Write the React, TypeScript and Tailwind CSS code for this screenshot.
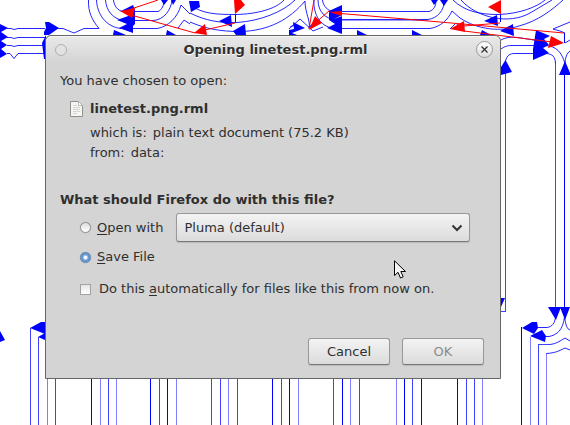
import React from "react";

type Wire = [x: number, opacity: number];

const WIRES: Wire[] = [
  [47, 0.5], [55, 0.75],
  [91, 1], [100, 0.5], [108, 0.75], [116, 0.5],
  [150, 1], [159, 0.75], [167, 1], [176, 0.5],
  [211, 0.75], [220, 0.75], [228, 0.5], [237, 0.75],
  [272, 1], [281, 0.75], [289, 1], [298, 0.5],
  [333, 0.75], [342, 1], [350, 0.5], [359, 0.75],
  [396, 0.5], [404, 1], [412, 0.75], [421, 1],
  [457, 1], [466, 0.75], [474, 0.75], [482, 0.5],
];

function Diagram() {
  return (
    <svg className="absolute top-0 left-0" width="570" height="425" viewBox="0 0 570 425" fill="none" aria-hidden="true">
      <g stroke="#0000ff" strokeOpacity="0.75" shapeRendering="crispEdges">
        {WIRES.map(([x, o]) => (
          <path key={x} d={`M${x + 0.5} 370V425`} strokeOpacity={o} />
        ))}
        <path d="M30.500 328V425M38.500 337V425" />
        <path d="M505.500 68V311.500H500M555.500 62V310" />
        <path d="M564.500 66V310" strokeWidth="1.500" strokeOpacity="1" />
        <path d="M521.500 327V425" strokeOpacity="1" />
        <path d="M530.500 337V425" strokeOpacity="0.500" />
        <path d="M538.500 425V344.500H550" />
        <path d="M546.500 425V353" strokeOpacity="0.500" />
      </g>
      <g stroke="#0000ff" strokeOpacity="0.850">
        <path d="M7 28.500H11L14 29.500L18 28.500H45M7 37.500H11L14 38.500L18 37.500H45M7 45.500H11L14 46.500L18 45.500H44M7 53.500H10L14 58.500L18 53.500H44" />
        <path d="M56 28.500H63L74 33L84 28.500H99C92 20 88 12 88.500 0" />
        <path d="M96.500 0C97 14 106 27 121 28.500H157C168 27 178 17 181 5L190 14" />
        <path d="M105.500 0C106 10 113 20 125 20.500H153C164 20 171 10 172 0" />
        <path d="M113.500 0C114 6 118 11 123 11.500H158C162 10 164 5 164 0" />
        <path d="M178 28L184 20L190 24" />
        <path d="M190 5C203 14 216 14.500 236 14.500C257 14 276 9 284 0" />
        <path d="M190 13C206 21 220 23 237 22.500C260 21 283 12 295 0" />
        <path d="M190 22C206 29 221 31.500 240 31.500C269 31 290 19 305 1C305 13 311 22 309 28L317 20L309 27" />
        <path d="M289 29L300 19L313 31M290 27L294 25M313 31L323 27" />
        <path d="M314 0C313 15 321 28 336 28.500H430C440 27 448 20 452 11L460 18C478 30 501 32 519 26C538 21 552 10 563 0" />
        <path d="M322.500 0C323 6 328 11 333 11.500H429C434 10 436 6 436 0" />
        <path d="M318 0C318 12 326 19 335 19.500H428C438 18 444 10 444 2" />
        <path d="M335 20.500H428" strokeOpacity="0.400" />
        <path d="M453 0C465 12 482 14.500 498 14.500C519 14 537 7 545 0M461 0C477 18 509 25 530 13L552 0" />
        <path d="M450 29L456 23L461 29M570 22L553 29L560 31L565 33M565 43L570 40" />
        <path d="M501 49C505 46 508 45.500 512 45.500H545C556 46 562 52 565 64M501 40C506 37 512 37 518 37.500L540 41M505.500 68V61C507 55 510 53.500 515 53.500H546C553 54 555 57 555.500 63M565 64C565 58 567 53 570 51" />
        <path d="M555.500 317C555 323 552 327 547 327.500H533M564.500 317C563 330 557 335 549 336.500H541M564.500 317C566 326 567 329 570 330M550 344.500C556 344 560 341 565 338L570 341M546.500 353.500C555 353 559 351 565 348L570 350" />
      </g>
      <g fill="#0000ff">
        <path d="M0 24L8 28L1 32L8 37L1 41L7 45L1 49L7 54L0 58Z" />
        <path d="M45 22H49L59 28L49 35H44V32L46 28Z M46 35L42 43L44 59H46Z" />
        <path d="M121 11L133 5L135 10V24L133 26V33L119 28L127 24L117 20L131 15Z" />
        <path d="M114 30L126 35H113Z M167 30L176 35H166Z" />
        <path d="M161 0H168L164 5Z M171 0H176L173 5Z" />
        <path d="M189 1H199L200 7L191 12Z M219 21L231 15L232 27Z M233 31L245 24L246 35H236Z" />
        <path d="M293 22L305 28L292 33L297 35H289V30L294 29Z" />
        <path d="M329 11L342 5V15L334 19L342 16V34L327 28L335 24L329 20Z M357 30L367 35H357Z" />
        <path d="M431 0H438L434 5Z M440 0H448L444 6Z M412 30L422 35H412Z" />
        <path d="M484 21L497 15L498 26Z M500 31L513 24L514 36Z M482 30L491 35H480Z" />
        <path d="M536 30L550 36L544 39L549 45L543 48L549 53L533 60V49L534 43Z" />
        <path d="M505.500 60L512 72L501 75V67Z M565 61L571 75H559Z" />
        <path d="M501 298H505L501 307Z M548 307H561L556 320Z M560 307H570L565 320Z" />
        <path d="M522 328L532 322H537L538 328L534 334Z M530 336L542 330L546 336L545 342Z" />
        <path d="M30 328L41 322H45V334Z M38 337L45 333V340Z M0 331L5 340L0 342Z" />
      </g>
      <g stroke="#ff0000">
        <path d="M131 9L158 0M131 15L195 33M205 30L235 23" />
        <path d="M309 29L314 0M314 24L329 11M335 13L440 22L564 33M464 26L500 23M464 31L552 42" />
      </g>
      <g fill="#ff0000">
        <path d="M120 11L135 8L134 12L132 18Z M234 0H241L245 5L235 14Z M194 33L205 24L207 35Z" />
        <path d="M309 30L315 16L322 23Z M329 12L342 11V16Z" />
        <path d="M488 7L501 0V14Z M450 29L464 21L465 32Z M551 36L564 43L548 48Z" />
      </g>
      <g stroke="#0000ff" shapeRendering="crispEdges">
        <path d="M235.500 14V22M500.500 14V22M564.500 33V43" />
      </g>
    </svg>
  );
}

function FileIcon() {
  return (
    <svg width="14" height="16" viewBox="0 0 14 16" fill="none" aria-hidden="true">
      <path d="M.5.500H8.500L12.500 4.500V15.500H.5Z" fill="#f5f5f3" stroke="#8e908b" />
      <path d="M8.500.500V4.500H12.500Z" fill="#fff" stroke="#b5b7b2" />
      <path d="M3 4.500H7M3 6.500H10M3 8.500H10M3 10.500H10M3 12.500H7" stroke="#d4d4d2" />
    </svg>
  );
}

const radio =
  "size-[11px] shrink-0 appearance-none rounded-full border border-[#8f8f8f] bg-[linear-gradient(#dedede,#ffffff)] shadow-[0_0_1px_#999] checked:border-[#5583b5] checked:bg-[radial-gradient(circle,#ffffff_0px,#ffffff_1px,#6699cf_3px)]";
const button =
  "h-[27px] w-[82px] rounded-[3px] border border-[#999] border-b-[#777] bg-linear-to-b from-[#f3f3f3] to-[#dcdcdc] shadow-[0_1px_1px_#bbb]";

export default function App() {
  return (
    <main className="relative min-h-screen overflow-hidden bg-white text-[13px] leading-5 text-[#2f2f2f] [font-family:'DejaVu_Sans',sans-serif]">
      <Diagram />
      <section
        role="dialog"
        aria-labelledby="title"
        className="absolute top-[35px] left-[45px] w-[456px] rounded-t-md border border-[#666] bg-[#d4d4d4] pb-[13px]"
      >
        <header className="flex h-[27px] items-center justify-between rounded-t-md bg-linear-to-b from-[#e9e9e9] to-[#d4d4d4] pr-[7px] pl-[9px] shadow-[inset_0_1px_0_#f4f4f4]">
          <button aria-label="Window menu" className="size-3 rounded-full border border-[#b0b0b0] bg-[#e2e2e2]" />
          <h1 id="title" className="pl-2 font-bold [text-shadow:0_1px_0_#fff]">Opening linetest.png.rml</h1>
          <button aria-label="Close" className="grid size-[17px] place-items-center rounded-full border border-[#999] bg-linear-to-b from-white to-[#ddd]">
            <svg width="7" height="7" viewBox="0 0 7 7" stroke="#333" strokeWidth="1.300" aria-hidden="true">
              <path d="M.5.500L6.500 6.500M6.500.500L.5 6.500" />
            </svg>
          </button>
        </header>
        <form className="pr-4 pl-[14px]" onSubmit={(e) => e.preventDefault()}>
          <p className="pt-2">You have chosen to open:</p>
          <div className="mt-2 flex items-center gap-[6px] pl-[10px]">
            <FileIcon />
            <strong>linetest.png.rml</strong>
          </div>
          <dl className="mt-1 pl-[30px]">
            <div className="flex gap-[6px]">
              <dt>which is:</dt>
              <dd>plain text document (75.2 KB)</dd>
            </div>
            <div className="flex gap-[6px]">
              <dt>from:</dt>
              <dd>data:</dd>
            </div>
          </dl>
          <fieldset className="mt-[27px]">
            <legend className="font-bold">What should Firefox do with this file?</legend>
            <div className="mt-[3px] flex items-center pr-[14px] pl-5">
              <label className="flex items-center gap-[6px]">
                <input type="radio" name="action" className={radio} />
                <span><u className="underline-offset-2">O</u>pen with</span>
              </label>
              <div className="relative ml-[13px] flex-1">
                <select
                  aria-label="Application"
                  className="block h-[29px] w-full appearance-none rounded-[3px] border border-[#999] border-b-[#777] bg-linear-to-b from-[#f3f3f3] to-[#dcdcdc] px-[7px] shadow-[0_1px_1px_#bbb]"
                >
                  <option>Pluma (default)</option>
                </select>
                <svg className="pointer-events-none absolute top-[11px] right-[7px]" width="12" height="8" viewBox="0 0 12 8" fill="none" stroke="#333" strokeWidth="2" aria-hidden="true">
                  <path d="M1.500 1.500L6 6L10.500 1.500" />
                </svg>
              </div>
            </div>
            <label className="mt-[5px] flex items-center gap-[6px] pl-5">
              <input type="radio" name="action" defaultChecked className={radio} />
              <span><u className="underline-offset-2">S</u>ave File</span>
            </label>
          </fieldset>
          <label className="mt-3 flex items-center gap-2 pl-5">
            <input type="checkbox" className="size-[11px] shrink-0 appearance-none border border-[#a2a2a2] bg-linear-to-b from-[#e6e6e6] to-white" />
            <span>Do this <u className="underline-offset-2">a</u>utomatically for files like this from now on.</span>
          </label>
          <div className="mt-[39px] flex justify-end gap-3">
            <button type="button" className={button}>Cancel</button>
            <button type="submit" disabled className={button + " text-[#8b8b8b]"}>OK</button>
          </div>
        </form>
      </section>
      <svg className="pointer-events-none absolute top-[260px] left-[394px]" width="13" height="20" viewBox="0 0 13 20" aria-hidden="true">
        <path d="M.5.800V15.500L4 12.300L6.500 18L9.200 16.800L6.800 11.500H11.500Z" fill="#f5f5f5" stroke="#000" />
      </svg>
    </main>
  );
}
